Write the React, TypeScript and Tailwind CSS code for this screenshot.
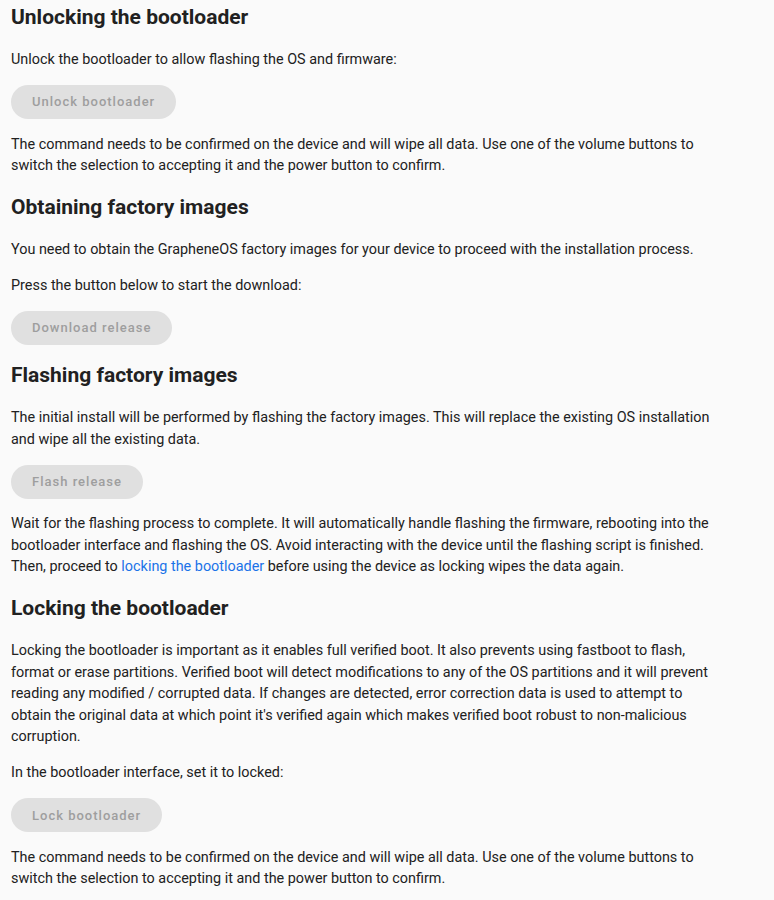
export default function App() {
  const Heading = ({ children }: { children: React.ReactNode }) => (
    <h2 className="text-[21px] font-bold leading-[33.6px] text-[#212121]">{children}</h2>
  );
  const P = ({ children }: { children: React.ReactNode }) => (
    <p className="text-[14.4px] leading-[21.5px] text-[#212121]">{children}</p>
  );
  const Btn = ({ label }: { label: string }) => (
    <div>
      <button
        disabled
        className="h-[34.3px] px-[21px] rounded-full bg-[#e0e0e0] text-[#9e9e9e] text-[13px] font-medium tracking-[1px]"
      >
        {label}
      </button>
    </div>
  );

  return (
    <div className="min-h-screen bg-[#fafafa] font-['Roboto',sans-serif]">
      <div className="pl-[11px] pt-[1px] w-[726px] flex flex-col gap-[14.4px]">
        <Heading>Unlocking the bootloader</Heading>
        <P>Unlock the bootloader to allow flashing the OS and firmware:</P>
        <Btn label="Unlock bootloader" />
        <P>
          The command needs to be confirmed on the device and will wipe all data. Use one of the volume buttons to
          switch the selection to accepting it and the power button to confirm.
        </P>

        <Heading>Obtaining factory images</Heading>
        <P>You need to obtain the GrapheneOS factory images for your device to proceed with the installation process.</P>
        <P>Press the button below to start the download:</P>
        <Btn label="Download release" />

        <Heading>Flashing factory images</Heading>
        <P>
          The initial install will be performed by flashing the factory images. This will replace the existing OS
          installation and wipe all the existing data.
        </P>
        <Btn label="Flash release" />
        <P>
          Wait for the flashing process to complete. It will automatically handle flashing the firmware, rebooting into
          the bootloader interface and flashing the OS. Avoid interacting with the device until the flashing script is
          finished. Then, proceed to{' '}
          <a href="#locking-the-bootloader" className="text-[#1a73e8]">
            locking the bootloader
          </a>{' '}
          before using the device as locking wipes the data again.
        </P>

        <Heading>Locking the bootloader</Heading>
        <P>
          Locking the bootloader is important as it enables full verified boot. It also prevents using fastboot to
          flash, format or erase partitions. Verified boot will detect modifications to any of the OS partitions and it
          will prevent reading any modified / corrupted data. If changes are detected, error correction data is used to
          attempt to obtain the original data at which point it's verified again which makes verified boot robust to
          non-malicious corruption.
        </P>
        <P>In the bootloader interface, set it to locked:</P>
        <Btn label="Lock bootloader" />
        <P>
          The command needs to be confirmed on the device and will wipe all data. Use one of the volume buttons to
          switch the selection to accepting it and the power button to confirm.
        </P>
      </div>
    </div>
  );
}
